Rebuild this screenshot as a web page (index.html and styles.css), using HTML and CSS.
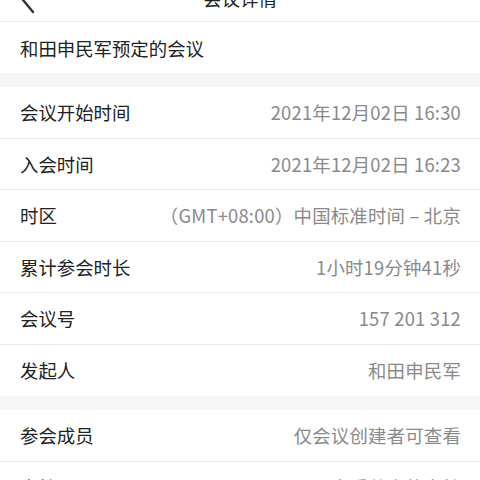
FILE: index.html
```html
<!DOCTYPE html>
<html lang="zh">
<head>
<meta charset="utf-8">
<link rel="stylesheet" href="styles.css">
</head>
<body>
<div class="page">
  <header class="nav">
    <svg class="back" width="16" height="28" viewBox="0 0 16 28"><path d="M13 2 L3 14 L13 26" fill="none" stroke="#333" stroke-width="2.4" stroke-linecap="round" stroke-linejoin="round"/></svg>
    <div class="title">会议详情</div>
    <div class="more"><span></span><span></span><span></span></div>
  </header>
  <section class="group first">
    <div class="row"><span class="label">和田申民军预定的会议</span></div>
  </section>
  <section class="group">
    <div class="row"><span class="label">会议开始时间</span><span class="value">2021年12月02日 16:30</span></div>
    <div class="row"><span class="label">入会时间</span><span class="value">2021年12月02日 16:23</span></div>
    <div class="row"><span class="label">时区</span><span class="value">（GMT+08:00）中国标准时间 – 北京</span></div>
    <div class="row"><span class="label">累计参会时长</span><span class="value">1小时19分钟41秒</span></div>
    <div class="row"><span class="label">会议号</span><span class="value">157 201 312</span></div>
    <div class="row"><span class="label">发起人</span><span class="value">和田申民军</span></div>
  </section>
  <section class="group">
    <div class="row"><span class="label">参会成员</span><span class="value">仅会议创建者可查看</span></div>
    <div class="row"><span class="label">文档</span><span class="value link">查看共享的文档</span></div>
  </section>
</div>
</body>
</html>
```
FILE: styles.css
```css
*, *::before, *::after {
  box-sizing: border-box;
}
html, body {
  margin: 0;
  padding: 0;
  background: #f5f6f8;
}
body {
  font-family: "Noto Sans CJK SC", "Noto Sans", sans-serif;
  color: #222;
  width: 480px;
  height: 480px;
  overflow: hidden;
}
.page {
  display: flex;
  flex-direction: column;
  gap: 14px;
}
.nav {
  height: 44px;
  margin-top: -22px;
  margin-bottom: -14px;
  background: #fff;
  border-bottom: 1px solid #ececec;
  display: flex;
  align-items: center;
  justify-content: space-between;
  padding: 0 24px 0 20px;
  position: relative;
}
.back {
  display: block;
}
.title {
  position: absolute;
  left: 0;
  right: 0;
  text-align: center;
  font-size: 18.5px;
  color: #222;
  line-height: 44px;
  top: -2px;
}
.more {
  display: flex;
  gap: 6px;
  margin-top: -4px;
}
.more span {
  width: 5px;
  height: 5px;
  border-radius: 50%;
  background: #333;
}
.group {
  background: #fff;
  display: flex;
  flex-direction: column;
}
.row {
  height: 51.5px;
  display: flex;
  align-items: center;
  justify-content: space-between;
  padding: 0 19px 0 20px;
  border-bottom: 1px solid #e9e9e9;
  font-size: 18.4px;
}
.group.first .row {
  height: 51px;
}
.row:last-child {
  border-bottom: none;
}
.label {
  color: #222;
}
.value {
  color: #8a8a8a;
  letter-spacing: 0.2px;
}
.value.link {
  color: #3b7be0;
}
```
